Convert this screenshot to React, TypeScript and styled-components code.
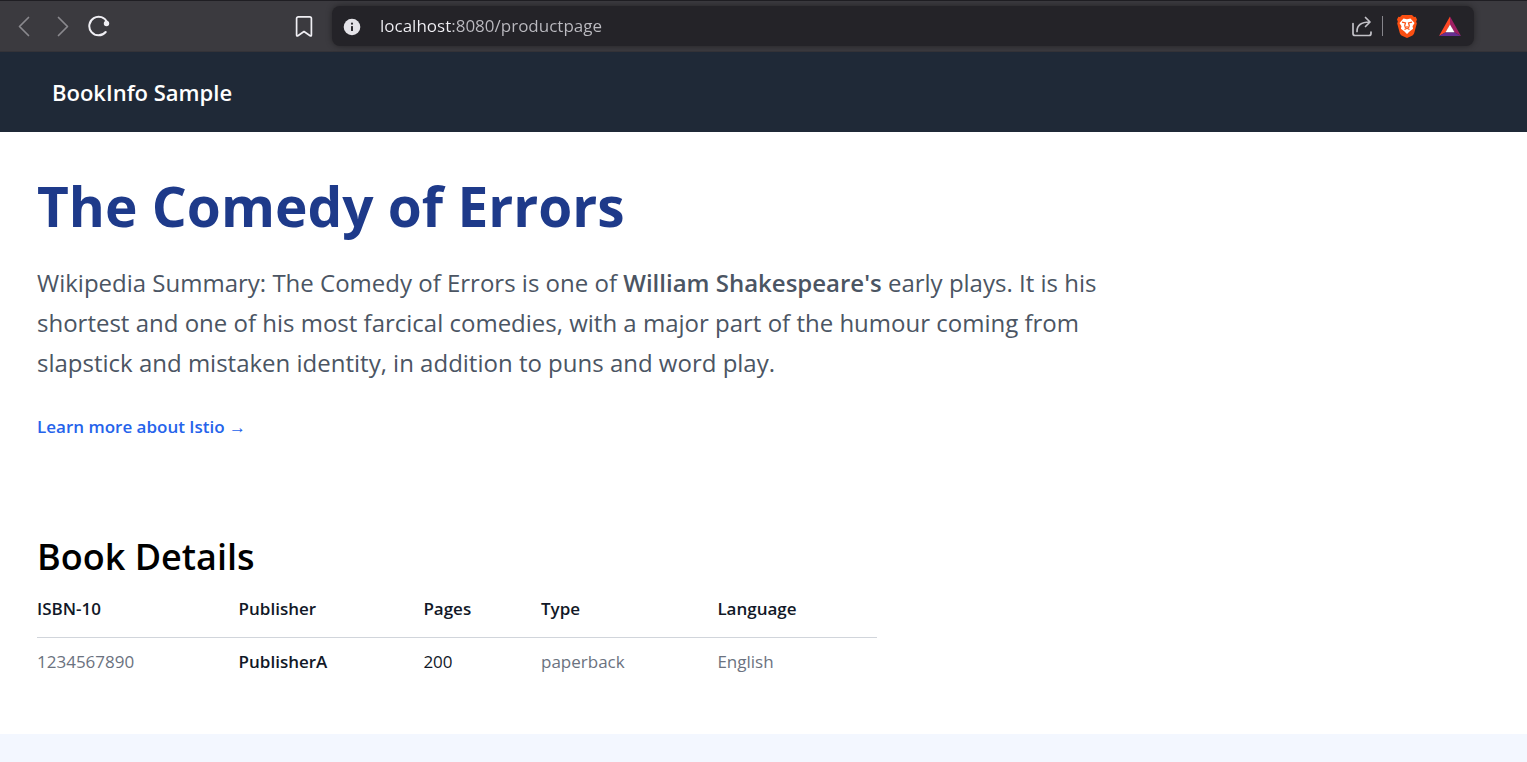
import React from "react";
import styled, { createGlobalStyle } from "styled-components";

const GlobalStyle = createGlobalStyle`
  *, *::before, *::after { box-sizing: border-box; }
  body {
    margin: 0;
    background: #ffffff;
    color: #000000;
    font-family: "Segoe UI", "Open Sans", "Noto Sans", sans-serif;
  }
`;

const Page = styled.div`
  display: flex;
  flex-direction: column;
  min-height: 100vh;
`;

const BrowserBar = styled.div`
  display: flex;
  align-items: center;
  height: 52px;
  padding: 0 53px 0 14px;
  background: #3b3a3f;
  border-top: 1px solid #1f1e23;
  border-bottom: 1px solid #343338;
`;

const NavButtons = styled.div`
  display: flex;
  gap: 13px;
`;

const IconButton = styled.button<{ $color?: string }>`
  display: flex;
  align-items: center;
  justify-content: center;
  width: 24px;
  height: 24px;
  padding: 0;
  border: 0;
  background: none;
  color: ${(p) => p.$color ?? "#f0eff4"};
  cursor: pointer;
`;

const BookmarkSlot = styled.div`
  margin-left: 180px;
`;

const AddressBar = styled.div`
  display: flex;
  flex: 1;
  align-items: center;
  height: 40px;
  margin-left: 16px;
  padding: 0 12px 0 8px;
  border-radius: 8px;
  background: #242328;
  box-shadow: 0 0 6px rgba(0, 0, 0, 0.4);
`;

const UrlField = styled.input`
  flex: 1;
  min-width: 0;
  margin: 0 16px;
  padding: 0;
  border: 0;
  outline: 0;
  font-family: inherit;
  font-size: 17px;
  line-height: 24px;
  color: transparent;
  background: linear-gradient(to right, #f2f1f6 72px, #bcbbc1 72px);
  background-clip: text;
  -webkit-background-clip: text;
`;

const BarDivider = styled.span`
  width: 1px;
  height: 20px;
  margin: 0 12px 0 8px;
  background: #86858b;
`;

const BrandButtons = styled.div`
  display: flex;
  gap: 19px;
`;

const SiteNav = styled.nav`
  display: flex;
  align-items: center;
  height: 80px;
  padding: 0 52px;
  background: #1f2937;
`;

const Brand = styled.a`
  color: #ffffff;
  font-size: 22px;
  line-height: 32px;
  font-weight: 600;
  text-decoration: none;
`;

const Content = styled.main`
  padding: 40px 37px 48px;
`;

const Title = styled.h1`
  margin: 0;
  color: #1e3a8a;
  font-size: 55px;
  line-height: 68px;
  font-weight: 700;
`;

const Summary = styled.p`
  max-width: 1080px;
  margin: 23px 0 0;
  color: #4b5563;
  font-size: 24px;
  line-height: 40px;

  b {
    font-weight: 600;
  }
`;

const LearnMore = styled.a`
  display: inline-block;
  margin-top: 32px;
  color: #2563eb;
  font-size: 17px;
  line-height: 24px;
  font-weight: 600;
  text-decoration: none;
`;

const Details = styled.section`
  margin-top: 94px;
`;

const SectionTitle = styled.h2`
  margin: 0;
  font-size: 36px;
  line-height: 48px;
  font-weight: 600;
`;

const DetailsTable = styled.table`
  width: 100%;
  max-width: 840px;
  table-layout: fixed;
  border-collapse: collapse;
  font-size: 17px;
  line-height: 24px;
  text-align: left;
`;

const Column = styled.col<{ $share: number }>`
  width: ${(p) => p.$share}%;
`;

const HeadCell = styled.th`
  padding: 16px 0;
  border-bottom: 1px solid #d1d5db;
  color: #111827;
  font-weight: 600;
`;

const Cell = styled.td<{ $tone?: "strong" | "dark" }>`
  padding: 12px 0;
  color: ${(p) => (p.$tone ? "#111827" : "#6b7280")};
  font-weight: ${(p) => (p.$tone === "strong" ? 600 : 400)};
`;

const LowerBand = styled.footer`
  flex: 1;
  min-height: 28px;
  background: #f3f7ff;
`;

const ChevronIcon = ({ right = false }: { right?: boolean }) => (
  <svg width="24" height="24" viewBox="0 0 24 24" fill="none" stroke="currentColor" strokeWidth="1.7" strokeLinecap="round" strokeLinejoin="round">
    <path d={right ? "M7.500 3.500l9 9-9 9" : "M14.500 3.500l-9 9 9 9"} />
  </svg>
);

const ReloadIcon = () => (
  <svg width="24" height="24" viewBox="1 0.500 24 24" fill="none">
    <path d="M20.200 9A9.300 9.300 0 1 0 18.700 18.500" stroke="currentColor" strokeWidth="2" strokeLinecap="round" />
    <circle cx="19.500" cy="10" r="2.700" fill="currentColor" />
  </svg>
);

const BookmarkIcon = () => (
  <svg width="24" height="24" viewBox="0 0 24 24" fill="none" stroke="currentColor" strokeWidth="1.700" strokeLinejoin="round">
    <path d="M6.300 2.800h11.400a1.700 1.700 0 0 1 1.700 1.700v16.500q0 1.500-1.300.7L12 17.500l-6.100 4.200q-1.300.8-1.300-.7V4.500a1.700 1.700 0 0 1 1.700-1.700z" />
  </svg>
);

const InfoIcon = () => (
  <svg width="24" height="24" viewBox="0 0 24 24">
    <circle cx="12" cy="13" r="8.300" fill="#e4e3e8" />
    <circle cx="12" cy="9.700" r="1.100" fill="#2b2a2f" />
    <rect x="11" y="12" width="2" height="5" rx="0.500" fill="#2b2a2f" />
  </svg>
);

const ShareIcon = () => (
  <svg width="24" height="24" viewBox="0 0 24 24" fill="none" stroke="currentColor" strokeWidth="1.700" strokeLinecap="round" strokeLinejoin="round">
    <path d="M3 9.500v10a2 2 0 0 0 2 2h14a2 2 0 0 0 2-2V18" />
    <path d="M7 17.500c0-6 4-9.500 12.500-9.500M15.500 3.500L20 8l-4.500 4.500" />
  </svg>
);

const LionIcon = () => (
  <svg width="24" height="24" viewBox="0 0 24 24">
    <path d="M7 1h10l2 2 1.600-.3L22 5.500l-.8 2 .6 2-2.500 9.200c-.4 1.500-1.200 2.300-2.300 3.100L12 24l-5-2.200c-1.100-.8-1.900-1.600-2.300-3.100L2.200 9.500l.6-2-.8-2 1.400-2.800L5 3z" fill="#fb4f12" />
    <path d="M8.500 4.500L12 5.200l3.500-.7 4 4.500-2 3.200.6 2.600-3.600 2.700L12 20l-2.500-2.500-3.600-2.700.6-2.600-2-3.200z" fill="#fff" />
    <path d="M7 8.200l3.500.8-.8 2.500.8 2.700M17 8.200l-3.500.8.8 2.500-.8 2.700M9.500 15.500L12 14.300l2.500 1.200M12 14.300V12" fill="none" stroke="#fb4f12" strokeWidth="1.200" />
  </svg>
);

const TriangleIcon = () => (
  <svg width="24" height="24" viewBox="0 0 24 24">
    <path d="M12 2.500L1 22l6.700-3.800L12 10.500z" fill="#ff4724" />
    <path d="M12 2.500L23 22l-6.700-3.800L12 10.500z" fill="#9e1f63" />
    <path d="M1 22h22l-6.700-3.800H7.700z" fill="#662d91" />
    <path d="M12 10.500l4.500 7.800h-9z" fill="#fff" />
  </svg>
);

export default function App() {
  return (
    <Page>
      <GlobalStyle />
      <BrowserBar>
        <NavButtons>
          <IconButton aria-label="Back" $color="#8a898e"><ChevronIcon /></IconButton>
          <IconButton aria-label="Forward" $color="#8a898e"><ChevronIcon right /></IconButton>
          <IconButton aria-label="Reload"><ReloadIcon /></IconButton>
        </NavButtons>
        <BookmarkSlot>
          <IconButton aria-label="Bookmark this page"><BookmarkIcon /></IconButton>
        </BookmarkSlot>
        <AddressBar>
          <IconButton aria-label="Site information"><InfoIcon /></IconButton>
          <UrlField type="text" aria-label="Address" defaultValue="localhost:8080/productpage" spellCheck={false} />
          <IconButton aria-label="Share" $color="#c3c2c8"><ShareIcon /></IconButton>
          <BarDivider />
          <BrandButtons>
            <IconButton aria-label="Shields"><LionIcon /></IconButton>
            <IconButton aria-label="Rewards"><TriangleIcon /></IconButton>
          </BrandButtons>
        </AddressBar>
      </BrowserBar>
      <SiteNav>
        <Brand href="#">BookInfo Sample</Brand>
      </SiteNav>
      <Content>
        <Title>The Comedy of Errors</Title>
        <Summary>
          Wikipedia Summary: The Comedy of Errors is one of <b>William Shakespeare's</b> early plays. It is his shortest
          and one of his most farcical comedies, with a major part of the humour coming from slapstick and mistaken
          identity, in addition to puns and word play.
        </Summary>
        <LearnMore href="#">Learn more about Istio →</LearnMore>
        <Details>
          <SectionTitle id="book-details">Book Details</SectionTitle>
          <DetailsTable aria-labelledby="book-details">
            <colgroup>
              <Column $share={24} />
              <Column $share={22} />
              <Column $share={14} />
              <Column $share={21} />
              <Column $share={19} />
            </colgroup>
            <thead>
              <tr>
                <HeadCell scope="col">ISBN-10</HeadCell>
                <HeadCell scope="col">Publisher</HeadCell>
                <HeadCell scope="col">Pages</HeadCell>
                <HeadCell scope="col">Type</HeadCell>
                <HeadCell scope="col">Language</HeadCell>
              </tr>
            </thead>
            <tbody>
              <tr>
                <Cell>1234567890</Cell>
                <Cell $tone="strong">PublisherA</Cell>
                <Cell $tone="dark">200</Cell>
                <Cell>paperback</Cell>
                <Cell>English</Cell>
              </tr>
            </tbody>
          </DetailsTable>
        </Details>
      </Content>
      <LowerBand />
    </Page>
  );
}
